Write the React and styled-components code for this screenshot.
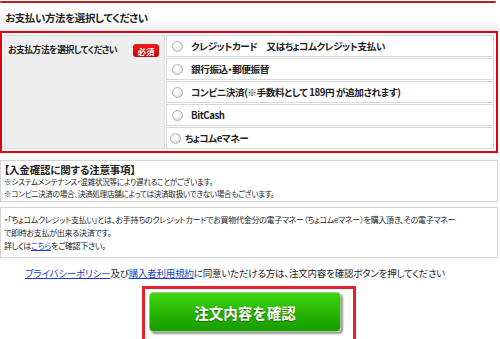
import React from 'react'
import styled, { createGlobalStyle } from 'styled-components'

const GlobalStyle = createGlobalStyle`
    html, body {
        margin: 0;
        padding: 0;
        background: #fff;
    }
    body {
        font-family: "Noto Sans CJK JP", "Noto Sans", sans-serif;
        color: #222;
        font-feature-settings: "palt";
    }
`

const Page = styled.div`
    width: 498px;
    padding-top: 1px;
`

const TopRule = styled.div`
    width: 496px;
    height: 2px;
    background: #b52222;
    border-radius: 1px;
`

const SectionTitle = styled.div`
    height: 28px;
    display: flex;
    align-items: center;
    padding-left: 5px;
    font-size: 10.5px;
    font-weight: 700;
    letter-spacing: -0.4px;
    background: linear-gradient(to bottom, #fff 65%, #ececec);
`

const MethodBox = styled.div`
    border: 2px solid #e60012;
    padding: 2px;
    display: grid;
    grid-template-columns: 161px 1fr;
    grid-auto-rows: 22px;
    gap: 1px;
    background: #fff;
`

const LabelCell = styled.div`
    grid-row: 1 / span 5;
    background: #eeeeee;
    border: 1px solid #dcdcdc;
    display: flex;
    align-items: flex-start;
    justify-content: space-between;
    padding: 7px 5px 0 3px;
    font-size: 8.8px;
    font-weight: 700;
    letter-spacing: -0.5px;
    line-height: 14px;
`

const Badge = styled.span`
    display: inline-flex;
    align-items: center;
    justify-content: center;
    width: 26px;
    height: 13px;
    margin-top: 1px;
    border-radius: 3px;
    background: linear-gradient(to bottom, #ee1c1c, #c80000);
    color: #fff;
    font-size: 8.5px;
    font-weight: 700;
    letter-spacing: 0;
`

const OptionRow = styled.label`
    box-sizing: border-box;
    border: 1px solid #d8d8d8;
    display: flex;
    align-items: center;
    gap: ${p => (p.tight ? '4px' : '8px')};
    padding-left: ${p => (p.tight ? '3px' : '5px')};
    font-size: 9.6px;
    font-weight: 700;
    letter-spacing: -0.4px;
    white-space: pre;
`

const Radio = styled.span`
    width: 9px;
    height: 9px;
    border-radius: 50%;
    border: 1px solid #b4b4b4;
    background: radial-gradient(circle at 40% 35%, #fff 20%, #dedede 80%);
    flex: none;
`

const NoteBox = styled.div`
    margin-top: ${p => p.top}px;
    border: 1px solid #d4d4d4;
    padding: ${p => p.pad};
    font-size: ${p => p.size}px;
    letter-spacing: -0.3px;
    line-height: ${p => p.lh}px;
    white-space: nowrap;
    overflow: hidden;
`

const NoteTitle = styled.div`
    font-size: 10.5px;
    font-weight: 700;
    letter-spacing: -0.2px;
`

const Link = styled.a`
    color: #1a3fcc;
    text-decoration: underline;
`

const Agreement = styled.div`
    margin-top: 8px;
    padding-left: 25px;
    font-size: 9.5px;
    letter-spacing: -0.2px;
    line-height: 14px;
    white-space: nowrap;
`

const ButtonRow = styled.div`
    margin-top: 6px;
    display: flex;
    justify-content: center;
`

const ButtonFrame = styled.div`
    width: 201px;
    height: 47px;
    border: 3px solid #e8202a;
    padding: 3px 3px 0 4px;
`

const ConfirmButton = styled.button`
    width: 192px;
    height: 40px;
    border: 1px solid #9bc98b;
    border-radius: 4px;
    background: linear-gradient(to bottom, #3fd60e, #22b000 60%, #1a9c00);
    box-shadow: 2px 2px 2px #9a9a9a;
    color: #fff;
    font-family: "Noto Sans CJK JP", sans-serif;
    font-size: 14.5px;
    font-weight: 700;
    text-shadow: 0 1px 1px #1a6a00;
`

const options = [
    'クレジットカード　又はちょコムクレジット支払い',
    '銀行振込・郵便振替',
    'コンビニ決済(※手数料として 189円 が追加されます)',
    'BitCash',
]

export default function App() {
    return (
        <Page>
            <GlobalStyle />
            <TopRule />
            <SectionTitle>お支払い方法を選択してください</SectionTitle>
            <MethodBox>
                <LabelCell>
                    <span>お支払方法を選択してください</span>
                    <Badge>必須</Badge>
                </LabelCell>
                {options.map(o => (
                    <OptionRow key={o}>
                        <Radio />
                        {o}
                    </OptionRow>
                ))}
                <OptionRow tight>
                    <Radio />
                    ちょコムeマネー
                </OptionRow>
            </MethodBox>
            <NoteBox top={7} pad="3px 3px 1px" lh={12} size={7.6}>
                <NoteTitle>【入金確認に関する注意事項】</NoteTitle>
                <div>※システムメンテナンス・混雑状況等により遅れることがございます。</div>
                <div>※コンビニ決済の場合、決済処理店舗によっては決済取扱いできない場合もございます。</div>
            </NoteBox>
            <NoteBox top={5} pad="5px 3px" lh={13} size={8}>
                <div>・「ちょコムクレジット支払い」とは、お手持ちのクレジットカードでお買物代金分の電子マネー（ちょコムeマネー）を購入頂き、その電子マネー</div>
                <div>で即時お支払が出来る決済です。</div>
                <div>詳しくは<Link href="#">こちら</Link>をご確認下さい。</div>
            </NoteBox>
            <Agreement>
                <Link href="#">プライバシーポリシー</Link>及び<Link href="#">購入者利用規約</Link>に同意いただける方は、注文内容を確認ボタンを押してください
            </Agreement>
            <ButtonRow>
                <ButtonFrame>
                    <ConfirmButton>注文内容を確認</ConfirmButton>
                </ButtonFrame>
            </ButtonRow>
        </Page>
    )
}
